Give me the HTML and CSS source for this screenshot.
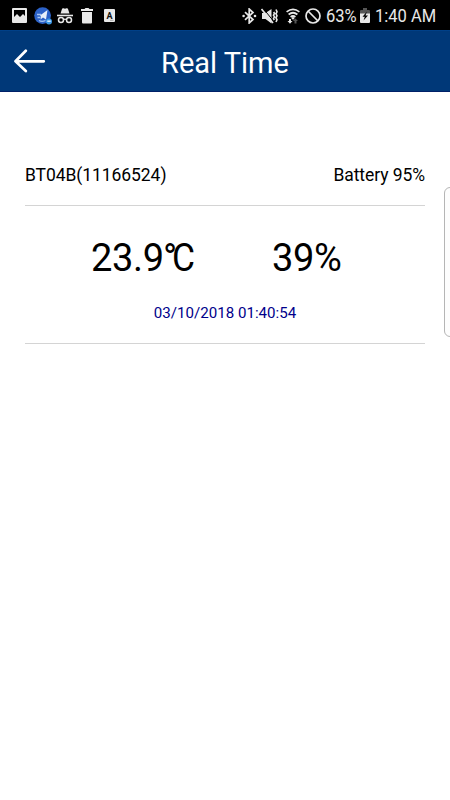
FILE: index.html
```html
<!DOCTYPE html>
<html lang="en">
<head>
    <meta charset="UTF-8">
    <meta name="viewport" content="width=device-width, initial-scale=1.0">
    <title>Real Time</title>
    <link rel="stylesheet" href="styles.css">
</head>
<body>
    <!-- Status bar -->
    <div class="status-bar">
        <div class="status-left">
            <svg class="icon-picture" width="15" height="15" viewBox="0 0 15 15">
                <path d="M1 0h13q1 0 1 1v13q0 1-1 1H1q-1 0-1-1V1q0-1 1-1zM2 2v7l3-3 3 3 3-3 2 2V2z" fill="#e8e8e8" fill-rule="evenodd"/>
            </svg>
            <svg class="icon-app" width="19" height="18" viewBox="0 0 19 18">
                <circle cx="8.6" cy="8.6" r="8.4" fill="#2c62c8"/>
                <path d="M6 8.500L13.500 3 12 12.500 9 10.500 6.500 12.500 7 9.800z" fill="#e8f0fa"/>
                <path d="M3 7.500h4M3.500 10.500h3M5 13.500c2 1.200 4.500 1 6.500 0" stroke="#a5c4f0" fill="none" stroke-width="1.300"/>
                <circle cx="15" cy="14.500" r="3" fill="#3d9be8"/>
                <path d="M13.300 14.200h3.400" stroke="#e4f0ff" stroke-width="1.400"/>
            </svg>
            <svg class="icon-incognito" width="16" height="16" viewBox="0 0 16 16">
                <path d="M3.500 5.500L5 1c.2-.8.800-1 1.500-.7L8 .8l1.500-.5c.7-.3 1.300-.1 1.500.7l1.500 4.500z" fill="#e8e8e8"/>
                <path d="M0 7.500h16" stroke="#e8e8e8" stroke-width="1.600"/>
                <circle cx="4" cy="12" r="2.500" fill="none" stroke="#e8e8e8" stroke-width="1.500"/>
                <circle cx="12" cy="12" r="2.500" fill="none" stroke="#e8e8e8" stroke-width="1.500"/>
                <path d="M6.300 11.700q1.700-1 3.400 0" fill="none" stroke="#e8e8e8" stroke-width="1.300"/>
            </svg>
            <svg class="icon-trash" width="12" height="16" viewBox="0 0 12 16">
                <path d="M0 1h3.500L4.500 0h3l1 1H12v2H0zM1 4h10v10.500q0 1-1 1H2q-1 0-1-1z" fill="#e8e8e8"/>
            </svg>
            <svg class="icon-letter" width="11" height="13" viewBox="0 0 11 13">
                <rect width="11" height="13" rx="1" fill="#e8e8e8"/>
                <text class="letter" x="5.400" y="9.500" text-anchor="middle">A</text>
                <path d="M6 11.300h3.500" stroke="#aaa"/>
            </svg>
        </div>
        <div class="status-right">
            <svg class="icon-bluetooth" width="15" height="16" viewBox="0 0 15 16">
                <path d="M3 4.200l8 7.300L7.200 15V1L11 4.500 3 11.800" fill="none" stroke="#e8e8e8" stroke-width="1.700"/>
                <circle cx="1.600" cy="8" r="1.300" fill="#e8e8e8"/>
                <circle cx="13" cy="8" r="1.300" fill="#e8e8e8"/>
            </svg>
            <svg class="icon-mute" width="17" height="16" viewBox="0 0 17 16">
                <path d="M1 5h3.500L10.500 1v14.500L4.500 11H1z" fill="#e8e8e8"/>
                <path d="M2.200.5L12 12.500" stroke="#000" stroke-width="1"/>
                <path d="M.5 1l11.500 14" stroke="#e8e8e8" stroke-width="1.700"/>
                <path d="M12.700 4l.8 1.500-1 1.700 1 1.700-1 1.700.8 1.400M15 1.500l1 2.300-1 2 1 2-1 2 1 2-1 2.200" fill="none" stroke="#e8e8e8" stroke-width="1.600"/>
            </svg>
            <svg class="icon-wifi" width="14" height="16" viewBox="0 0 14 16">
                <path d="M.6 3.800q6.400-5 12.800 0M2.600 6.500q4.400-3.500 8.800 0M4.600 9q2.400-2 4.800 0" fill="none" stroke="#e8e8e8" stroke-width="1.700"/>
                <circle cx="7" cy="10.300" r="1.200" fill="#e8e8e8"/>
                <path d="M3 11h2v2h1.500L4 15.800 1.500 13H3z" fill="#e8e8e8"/>
                <path d="M6.800 13L9.500 10.500l2.500 2.500h-1.500v2.500h-2V13z" fill="#555"/>
            </svg>
            <svg class="icon-blocked" width="16" height="16" viewBox="0 0 16 16">
                <circle cx="8" cy="8" r="7" fill="none" stroke="#e8e8e8" stroke-width="1.700"/>
                <path d="M3 3l10 10" stroke="#e8e8e8" stroke-width="1.700"/>
            </svg>
            <div class="battery-text"><span>63%</span></div>
            <svg class="icon-battery" width="10" height="15" viewBox="0 0 10 15">
                <path d="M3 0h4v2h2q1 0 1 1v3H0V3q0-1 1-1h2z" fill="#555"/>
                <path d="M0 5.500h10V14q0 1-1 1H1q-1 0-1-1z" fill="#e8e8e8"/>
                <path d="M7 3.500L2.500 8.700h2.300l-1.300 3.800L8 7.500H5.500z" fill="#000"/>
            </svg>
            <div class="clock"><span>1:40 AM</span></div>
        </div>
    </div>

    <!-- Header -->
    <div class="header">
        <a href="#" class="btn-back" aria-label="Back">
            <svg width="32" height="24" viewBox="0 0 32 24">
                <path d="M11.800 1.800L1.500 12.300 11.800 22M1.800 12.300h28" fill="none" stroke="#fff" stroke-width="2.700" stroke-linecap="round" stroke-linejoin="round"/>
            </svg>
        </a>
        <h1>Real Time</h1>
    </div>

    <!-- Sensor -->
    <div class="sensor">
        <div class="sensor-info">
            <div class="sensor-name">BT04B(11166524)</div>
            <div class="sensor-battery">Battery 95%</div>
        </div>
        <div class="sensor-data">
            <div class="values">
                <div class="temperature">23.9<span class="degree">°</span><span class="unit">C</span></div>
                <div class="humidity">39%</div>
            </div>
            <div class="date">03/10/2018 01:40:54</div>
        </div>
    </div>

    <!-- Edge panel handle -->
    <div class="edge-handle"></div>
</body>
</html>
```
FILE: styles.css
```css
* {
    margin: 0;
    padding: 0;
    box-sizing: border-box;
    font-family: Roboto, sans-serif;
}

body {
    background-color: #fff;
    color: #000;
    height: 100vh;
    overflow: hidden;
    position: relative;
}

svg {
    display: block;
    flex-shrink: 0;
}

.status-bar {
    background-color: #000;
    height: 30px;
    padding: 1px 13px 0 12px;
    display: flex;
    justify-content: space-between;
    align-items: center;
}

.status-left, .status-right {
    display: flex;
    align-items: center;
}

.icon-app {
    margin-left: 7px;
}

.icon-incognito {
    margin-left: 4px;
}

.icon-trash {
    margin-left: 8px;
}

.icon-letter {
    margin-left: 11px;
}

.letter {
    font-size: 9px;
    font-weight: bold;
    fill: #111;
}

.icon-mute {
    margin-left: 4px;
}

.icon-wifi {
    margin-left: 8px;
}

.icon-blocked {
    margin-left: 5px;
}

.battery-text, .clock {
    font-size: 19px;
    line-height: 24px;
    color: #e8e8e8;
    white-space: nowrap;
}

.battery-text span, .clock span {
    display: inline-block;
    transform: scaleX(0.87);
    transform-origin: left;
}

.battery-text {
    width: 31px;
    margin-left: 5px;
}

.icon-battery {
    margin-left: 3px;
}

.clock {
    width: 62px;
    margin-left: 5px;
}

.header {
    background-color: #003878;
    height: 62px;
    padding: 0 14px;
    display: grid;
    grid-template-columns: 32px 1fr 32px;
    align-items: center;
    border-top: 1px solid #004088;
    border-bottom: 1px solid #002068;
}

.header h1 {
    color: #fff;
    font-size: 29px;
    font-weight: normal;
    text-align: center;
    padding-top: 4px;
}

.sensor {
    padding: 0 25px;
}

.sensor-info {
    height: 114px;
    padding-top: 73px;
    display: flex;
    justify-content: space-between;
    font-size: 17.5px;
    letter-spacing: -0.07px;
    line-height: 21px;
    border-bottom: 1px solid #d4d4d4;
}

.sensor-data {
    height: 138px;
    padding-top: 30px;
    border-bottom: 1px solid #d4d4d4;
}

.values {
    display: flex;
    padding-left: 66px;
    font-size: 38px;
    letter-spacing: -0.3px;
    line-height: 45px;
}

.temperature {
    width: 181px;
}

.degree {
    margin-left: -1px;
    letter-spacing: -5px;
}

.unit {
    display: inline-block;
    transform: scaleX(0.93);
    transform-origin: left;
}

.date {
    margin-top: 22px;
    text-align: center;
    color: #00008b;
    font-size: 15.1px;
    line-height: 20px;
}

.edge-handle {
    position: absolute;
    top: 187px;
    right: -6px;
    width: 12px;
    height: 150px;
    border: 1px solid #b5b5b5;
    border-radius: 6px;
    background-color: #fdfdfd;
}
```
